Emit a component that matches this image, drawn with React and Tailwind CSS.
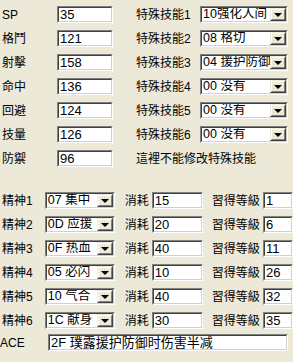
import React from "react";

const stats = [
  ["SP", "35"],
  ["格鬥", "121"],
  ["射擊", "158"],
  ["命中", "136"],
  ["回避", "124"],
  ["技量", "126"],
  ["防禦", "96"],
];

const skills = ["10强化人间", "08 格切", "04 援护防御", "00 没有", "00 没有", "00 没有"];

const spirits = [
  ["07 集中", "15", "1"],
  ["0D 应援", "20", "6"],
  ["0F 热血", "40", "11"],
  ["05 必闪", "10", "26"],
  ["10 气合", "40", "32"],
  ["1C 献身", "30", "35"],
];

// sunken 3d box, like an old win32 edit control
const Sunken = ({ className, children }) => (
  <div
    className={`h-[17px] shrink-0 border border-t-[#808080] border-l-[#808080] border-r-white border-b-white ${className}`}
  >
    <div className="h-full border border-t-[#404040] border-l-[#404040] border-r-[#d4d0c8] border-b-[#d4d0c8] bg-white flex items-center overflow-hidden">
      {children}
    </div>
  </div>
);

const Edit = ({ className, value }) => (
  <Sunken className={className}>
    <span className="pl-[1px] text-[13px] leading-none whitespace-nowrap">{value}</span>
  </Sunken>
);

const Combo = ({ className, value }) => (
  <Sunken className={className}>
    <span className="flex-1 min-w-0 pl-[1px] text-[12.5px] leading-none whitespace-nowrap overflow-hidden">{value}</span>
    <div className="w-[16px] h-full shrink-0 border border-t-[#ece9d8] border-l-[#ece9d8] border-r-[#404040] border-b-[#404040]">
      <div className="h-full bg-[#ece9d8] border border-t-white border-l-white border-r-[#808080] border-b-[#808080] flex items-center justify-center">
        <div className="w-0 h-0 border-l-[4px] border-r-[4px] border-t-[4px] border-l-transparent border-r-transparent border-t-black mt-[1px]" />
      </div>
    </div>
  </Sunken>
);

export default function App() {
  return (
    <div
      className="w-[293px] h-[362px] overflow-hidden bg-[#ece9d8] text-black text-[12px] leading-none"
      style={{ fontFamily: '"Liberation Sans", "Noto Sans CJK SC", sans-serif' }}
    >
      <div className="flex pt-[6px]">
        <div className="w-[136px] pl-[2px] flex flex-col gap-[7px]">
          {stats.map(([label, value]) => (
            <div key={label} className="flex items-center">
              <span className="w-[55px] whitespace-nowrap">{label}</span>
              <Edit className="w-[56px]" value={value} />
            </div>
          ))}
        </div>
        <div className="flex flex-col gap-[7px]">
          {skills.map((s, i) => (
            <div key={i} className="flex items-center">
              <span className="w-[64px] whitespace-nowrap">特殊技能{i + 1}</span>
              <Combo className="w-[88px]" value={s} />
            </div>
          ))}
          <div className="h-[17px] flex items-center whitespace-nowrap">這裡不能修改特殊技能</div>
        </div>
      </div>

      <div className="mt-[25px] flex flex-col gap-[7px]">
        {spirits.map(([name, cost, level], i) => (
          <div key={i} className="flex items-center pl-[2px]">
            <span className="w-[46px] whitespace-nowrap">精神{i + 1}</span>
            <Combo className="w-[70px]" value={name} />
            <span className="ml-[10px] w-[29px] whitespace-nowrap">消耗</span>
            <Edit className="w-[51px]" value={cost} />
            <span className="ml-[9px] w-[55px] whitespace-nowrap">習得等級</span>
            <Edit className="w-[30px]" value={level} />
          </div>
        ))}
        <div className="flex items-center mt-[-2px]">
          <span className="w-[48px] whitespace-nowrap">ACE</span>
          <Edit className="w-[240px]" value="2F 璞露援护防御时伤害半减" />
        </div>
      </div>
    </div>
  );
}
